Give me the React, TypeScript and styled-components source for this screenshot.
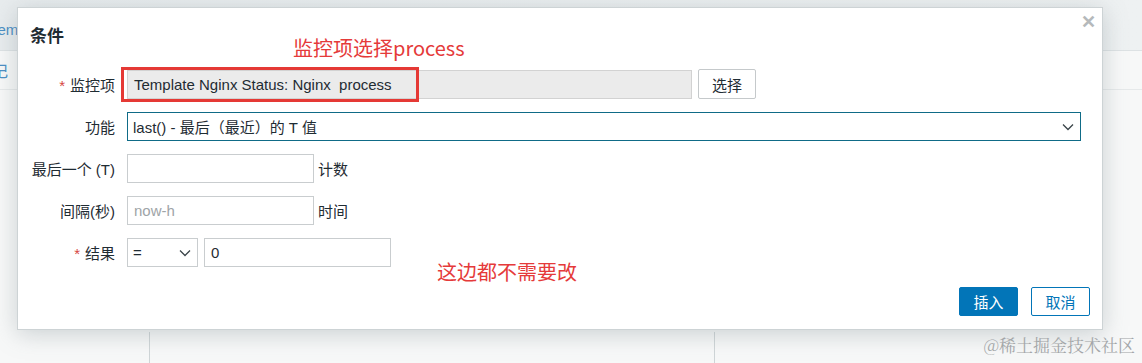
import React from 'react'
import styled, { createGlobalStyle } from 'styled-components'

const GlobalStyle = createGlobalStyle`
  html, body {
    margin: 0;
    padding: 0;
    background: #f7f8f8;
    font-family: "Liberation Sans", "Noto Sans CJK SC", sans-serif;
  }
`

const Page = styled.div`
  position: relative;
  width: 1142px;
  height: 363px;
  overflow: hidden;
  background: #f7f8f8;
`

const TopBand = styled.div`
  height: 50px;
  background: linear-gradient(90deg, #e8ecee 0%, #eef1f2 100%);
  border-bottom: 1px solid #dde2e4;
  display: flex;
  align-items: center;
`

const Crumb = styled.span`
  margin-left: -10px;
  margin-top: 8px;
  color: #4a8ec4;
  font-size: 15px;
`

const SubRow = styled.div`
  height: 38px;
  border-bottom: 1px solid #e6e9ea;
  display: flex;
  align-items: center;
`

const SubLink = styled.span`
  margin-left: -8px;
  color: #4a8ec4;
  font-size: 16px;
`

const Columns = styled.div`
  position: absolute;
  top: 332px;
  left: 0;
  right: 0;
  bottom: 0;
  display: grid;
  grid-template-columns: 150px 565px 1fr;
`

const Col = styled.div<{ $line?: boolean }>`
  border-right: ${p => (p.$line ? '1px solid #cfd5d7' : 'none')};
`

const Dialog = styled.div`
  position: absolute;
  left: 17px;
  top: 7px;
  width: 1086px;
  height: 323px;
  box-sizing: border-box;
  background: #fff;
  border: 1px solid #cdd3d5;
  box-shadow: 0 4px 22px rgba(120, 135, 140, 0.35);
  padding: 14px 12px 0 12px;
  display: flex;
  flex-direction: column;
`

const TitleRow = styled.div`
  display: flex;
  align-items: center;
  height: 24px;
`

const Title = styled.h4`
  margin: 0;
  font-size: 17px;
  font-weight: bold;
  color: #1f2c33;
  font-family: "Noto Sans CJK SC", sans-serif;
`

const Close = styled.span`
  position: absolute;
  right: 6px;
  top: 3px;
  color: #b5b9bb;
  font-size: 18px;
  font-weight: bold;
`

const Note = styled.span<{ $left: number; $top: number }>`
  position: absolute;
  left: ${p => p.$left}px;
  top: ${p => p.$top}px;
  color: #e53a3a;
  font-size: 20px;
  font-family: "Noto Sans CJK SC", sans-serif;
  white-space: nowrap;
`

const Form = styled.div`
  margin-top: 23px;
  display: grid;
  grid-template-columns: 85px 1fr;
  column-gap: 12px;
  row-gap: 13px;
  align-items: center;
`

const Label = styled.label`
  text-align: right;
  font-size: 15px;
  color: #1f2c33;
  white-space: nowrap;
  font-family: "Liberation Sans", "Noto Sans CJK SC", sans-serif;
`

const Star = styled.span`
  color: #d64541;
  margin-right: 5px;
`

const Field = styled.div`
  display: flex;
  align-items: center;
  gap: 6px;
`

const Input = styled.div<{ $w: number; $readonly?: boolean; $placeholder?: boolean }>`
  width: ${p => p.$w}px;
  height: 29px;
  box-sizing: border-box;
  border: 1px solid ${p => (p.$readonly ? '#d2d2d2' : '#c9cdcf')};
  background: ${p => (p.$readonly ? '#ebebeb' : '#fff')};
  color: ${p => (p.$placeholder ? '#9ea4a7' : '#1f2c33')};
  font-size: 15px;
  padding: 0 6px;
  display: flex;
  align-items: center;
  white-space: pre;
`

const Select = styled.div<{ $w: number; $focus?: boolean }>`
  width: ${p => p.$w}px;
  height: 29px;
  box-sizing: border-box;
  border: 1px solid ${p => (p.$focus ? '#0f6b87' : '#c9cdcf')};
  background: #fff;
  color: #1f2c33;
  font-size: 15px;
  padding: 0 6px 0 5px;
  display: flex;
  align-items: center;
  justify-content: space-between;
`

const Unit = styled.span`
  font-size: 15px;
  color: #1f2c33;
  margin-left: -2px;
`

const Button = styled.button<{ $primary?: boolean }>`
  height: 29px;
  min-width: 59px;
  box-sizing: border-box;
  border-radius: 2px;
  font-size: 15px;
  font-family: "Noto Sans CJK SC", sans-serif;
  padding: 0 12px;
  cursor: pointer;
  border: 1px solid #0275b8;
  background: ${p => (p.$primary ? '#0275b8' : '#fff')};
  color: ${p => (p.$primary ? '#fff' : '#0275b8')};
`

const PickButton = styled.button`
  height: 30px;
  width: 58px;
  box-sizing: border-box;
  border: 1px solid #c5c9cb;
  border-radius: 2px;
  background: #fff;
  color: #1f2c33;
  font-size: 15px;
  font-family: "Noto Sans CJK SC", sans-serif;
`

const Footer = styled.div`
  margin-top: auto;
  margin-bottom: 13px;
  display: flex;
  justify-content: flex-end;
  gap: 13px;
`

const Highlight = styled.div`
  position: absolute;
  left: 103px;
  top: 59px;
  width: 298px;
  height: 35px;
  box-sizing: border-box;
  border: 3px solid #e53935;
`

const Watermark = styled.span`
  position: absolute;
  right: 7px;
  bottom: 6px;
  color: #a3a6a8;
  font-size: 17px;
  font-family: "Noto Serif CJK SC", "Liberation Serif", serif;
`

const Chevron = () => (
  <svg width="12" height="8" viewBox="0 0 12 8">
    <path d="M1 1.5 L6 6.5 L11 1.5" fill="none" stroke="#3a4449" strokeWidth="1.3" />
  </svg>
)

export default function App() {
  return (
    <Page>
      <GlobalStyle />
      <TopBand>
        <Crumb>Template</Crumb>
      </TopBand>
      <SubRow>
        <SubLink>记</SubLink>
      </SubRow>
      <Columns>
        <Col $line />
        <Col $line />
        <Col />
      </Columns>

      <Dialog>
        <TitleRow>
          <Title>条件</Title>
        </TitleRow>
        <Close>✕</Close>
        <Note $left={275} $top={25}>监控项选择process</Note>
        <Note $left={419} $top={249}>这边都不需要改</Note>

        <Form>
          <Label><Star>*</Star>监控项</Label>
          <Field>
            <Input $w={565} $readonly>Template Nginx Status: Nginx  process</Input>
            <PickButton>选择</PickButton>
          </Field>

          <Label>功能</Label>
          <Field>
            <Select $w={954} $focus>
              <span>last() - 最后（最近）的 T 值</span>
              <Chevron />
            </Select>
          </Field>

          <Label>最后一个 (T)</Label>
          <Field>
            <Input $w={187} />
            <Unit>计数</Unit>
          </Field>

          <Label>间隔(秒)</Label>
          <Field>
            <Input $w={187} $placeholder>now-h</Input>
            <Unit>时间</Unit>
          </Field>

          <Label><Star>*</Star>结果</Label>
          <Field>
            <Select $w={71}>
              <span>=</span>
              <Chevron />
            </Select>
            <Input $w={187}>0</Input>
          </Field>
        </Form>

        <Highlight />

        <Footer>
          <Button $primary>插入</Button>
          <Button>取消</Button>
        </Footer>
      </Dialog>

      <Watermark>@稀土掘金技术社区</Watermark>
    </Page>
  )
}
